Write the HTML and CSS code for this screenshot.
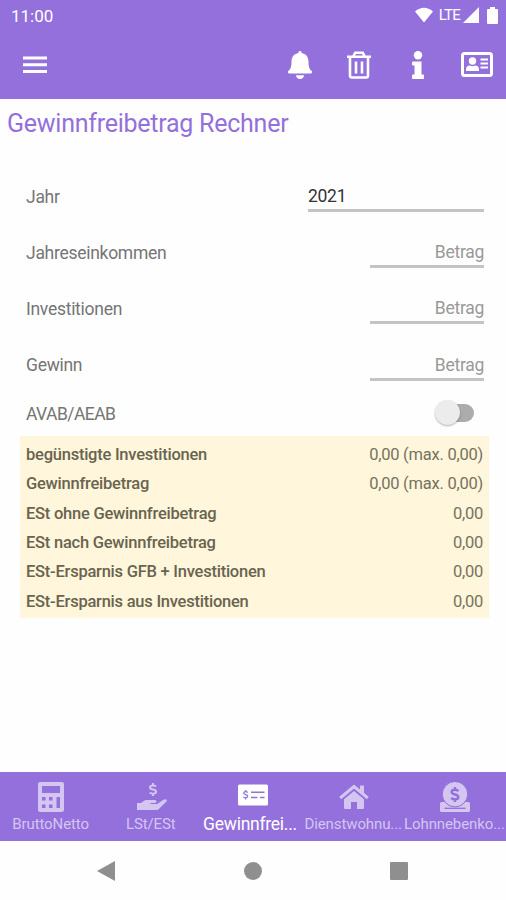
FILE: index.html
```html
<!DOCTYPE html>
<html lang="de">
<head>
	<meta charset="utf-8">
	<title>Gewinnfreibetrag Rechner</title>
	<link rel="stylesheet" href="styles.css">
</head>

<body>
	<header>
		<!-- Status bar -->
		<div class="status">
			<span class="time">11:00</span>
			<svg class="wifi" width="20" height="16" viewBox="0 0 20 16"><path d="M1 4.5Q10-3 19 4.5L10 15.5z"/></svg>
			<span class="lte">LTE</span>
			<svg class="signal" width="16" height="16" viewBox="0 0 16 16"><path d="M16 0v16H0z"/></svg>
			<svg class="battery" width="11" height="17" viewBox="0 0 11 17"><path d="M3 0h5v2h2q1 0 1 1v13q0 1-1 1H1q-1 0-1-1V3q0-1 1-1h2z"/></svg>
		</div>

		<!-- Toolbar -->
		<div class="toolbar">
			<svg class="menu" width="24" height="18" viewBox="0 0 24 18"><path d="M0 .5h24v3H0zM0 7.2h24v3H0zM0 14h24v3H0z"/></svg>
			<svg class="bell" width="26" height="28" viewBox="0 0 26 28"><path d="M11.500 2V1q0-1 1.500-1t1.500 1v1c4.500.8 7 4 7 8.500 0 6.500 1.300 7.600 3.300 9.600.8.900.2 2.400-1.100 2.400H2.300C1 22.500.4 21 1.200 20.100c2-2 3.300-3.100 3.300-9.600C4.500 6 7 2.800 11.500 2zM9 24.200h8Q16.500 28 13 28T9 24.200z"/></svg>
			<svg class="trash" width="26" height="28" viewBox="0 0 26 28"><path class="line" d="M1 5.700h24M7.500 5l1.700-3.300h7.600L18.500 5M4 6v18.500q0 2 2 2h14q2 0 2-2V6M10 10.500v12M16 10.500v12"/></svg>
			<svg class="info" width="12" height="28" viewBox="0 0 12 28"><circle cx="6" cy="4.200" r="4.200"/><path d="M1 10.500h8.500v13h1.600q.9 0 .9.900v2.700q0 .9-.9.900H.900Q0 28 0 27.100v-2.700q0-.9.900-.9h1.600v-9H1q-1 0-1-.9v-2.200q0-.9 1-.9z"/></svg>
			<svg class="card" width="32" height="25" viewBox="0 0 32 25"><rect class="line" x="1.500" y="1.500" width="29" height="22" rx="2"/><circle cx="11.500" cy="9" r="3.700"/><path d="M5 19v-1.500q0-4 4-4 2.500 1.300 5 0 4 0 4 4V19zM19.500 6.500H27v2h-7.500zM19.500 10.500H27v2h-7.500zM19.500 14.500H27v2h-7.500z"/></svg>
		</div>
	</header>

	<main>
		<h1>Gewinnfreibetrag Rechner</h1>

		<!-- Eingabe -->
		<div class="form">
			<div class="row">
				<span class="label">Jahr</span>
				<span class="field year">2021</span>
			</div>
			<div class="row">
				<span class="label">Jahreseinkommen</span>
				<span class="field">Betrag</span>
			</div>
			<div class="row">
				<span class="label">Investitionen</span>
				<span class="field">Betrag</span>
			</div>
			<div class="row">
				<span class="label">Gewinn</span>
				<span class="field">Betrag</span>
			</div>
			<div class="row toggle">
				<span class="label">AVAB/AEAB</span>
				<span class="switch"><span class="thumb"></span></span>
			</div>
		</div>

		<!-- Ergebnis -->
		<table class="result">
			<tr><th>begünstigte Investitionen</th><td>0,00 (max. 0,00)</td></tr>
			<tr><th>Gewinnfreibetrag</th><td>0,00 (max. 0,00)</td></tr>
			<tr><th>ESt ohne Gewinnfreibetrag</th><td>0,00</td></tr>
			<tr><th>ESt nach Gewinnfreibetrag</th><td>0,00</td></tr>
			<tr><th>ESt-Ersparnis GFB + Investitionen</th><td>0,00</td></tr>
			<tr><th>ESt-Ersparnis aus Investitionen</th><td>0,00</td></tr>
		</table>
	</main>

	<!-- Tabs -->
	<nav class="tabs">
		<div class="tab">
			<svg width="26" height="30" viewBox="0 0 26 30"><path fill-rule="evenodd" d="M2 0h22q2 0 2 2v26q0 2-2 2H2q-2 0-2-2V2q0-2 2-2zM4 4v7h18V4zM4 15v3.500h3.500V15zM11 15v3.500h3.500V15zM4 22.500V26h3.500v-3.500zM11 22.500V26h3.500v-3.500zM18.500 15v11H22V15z"/></svg>
			<span>BruttoNetto</span>
		</div>
		<div class="tab">
			<svg width="30" height="30" viewBox="0 0 30 30"><path class="line dollar" d="M19 4.500q-1-1-3-1-3 0-3 2 0 1.500 3 2t3 2.200q0 2-3 2-2 0-3.300-1.200M16 1v2.500M16 11.500V14"/><path d="M0 21h4l3-2.300q1-.7 2.500-.7H18q1.500 0 1.500 1.400T18 21h-4.500v1H20l6.500-4.200q1.700-.8 2.700-.3 1.300 1 0 2.300l-7.500 7.500q-1 .7-2.400.7H0z"/></svg>
			<span>LSt/ESt</span>
		</div>
		<div class="tab active">
			<svg width="30" height="30" viewBox="0 0 30 30"><path fill-rule="evenodd" d="M1.500 2.500h27Q30 2.500 30 4v18q0 1.500-1.500 1.500h-27Q0 23.500 0 22V4q0-1.500 1.500-1.500zM13 9.500V11h13.500V9.500zM13 14.700v1.600h6.500v-1.600zM22 14.700v1.600h4.500v-1.600z"/><path class="line cut" d="M9.700 10.500q-.8-.8-2-.8-2 0-2 1.400 0 1.100 2 1.500t2 1.600q0 1.500-2 1.500-1.300 0-2.200-.8M7.700 8v2M7.700 15.500v2"/></svg>
			<span>Gewinnfrei...</span>
		</div>
		<div class="tab">
			<svg width="30" height="30" viewBox="0 0 30 30"><path class="line roof" d="M1.200 16L15 4.500 28.800 16"/><path d="M21 3.500h4v9L21 9zM15 9l10 8.300V26q0 1-1 1h-6v-7h-6v7H6q-1 0-1-1v-8.700z"/></svg>
			<span>Dienstwohnu...</span>
		</div>
		<div class="tab">
			<svg width="30" height="30" viewBox="0 0 30 30"><path d="M1.500 20h4l3 3.500h13l3-3.500h4Q30 20 30 21.500v7q0 1.500-1.500 1.500h-27Q0 30 0 28.500v-7Q0 20 1.500 20z"/><circle class="ring" cx="15" cy="12.200" r="12.700"/><path class="line cut thick" d="M18.500 9q-1.300-1.200-3.500-1.200-3.300 0-3.300 2.200 0 1.800 3.300 2.500t3.300 2.600q0 2.300-3.300 2.300-2.300 0-3.800-1.400M15 5v2.500M15 17.500V20"/><path class="line cut" d="M4.500 26.300h21"/></svg>
			<span>Lohnnebenko...</span>
		</div>
	</nav>

	<!-- Android navigation -->
	<div class="navbar">
		<svg width="18" height="20" viewBox="0 0 18 20"><path d="M18 0v20L0 10z"/></svg>
		<svg width="18" height="18" viewBox="0 0 18 18"><circle cx="9" cy="9" r="9"/></svg>
		<svg width="18" height="18" viewBox="0 0 18 18"><rect width="18" height="18" rx="1"/></svg>
	</div>
</body>
</html>
```
FILE: styles.css
```css
* {
	box-sizing: border-box;
}
body {
	margin: 0;
	height: 900px;
	display: flex;
	flex-direction: column;
	font-family: Roboto, sans-serif;
	font-size: 17.5px;
	letter-spacing: -0.28px;
	color: #757575;
	background: #fefefe;
	overflow: hidden;
}
svg {
	display: block;
	flex: none;
	fill: currentColor;
}
.line {
	fill: none;
	stroke: currentColor;
	stroke-width: 3;
}

/* header */
header {
	height: 99px;
	background: #9370db;
	color: #fff;
}
.status {
	height: 31px;
	display: flex;
	align-items: center;
	padding: 0 8px 0 11px;
}
.time {
	font-size: 17px;
	letter-spacing: 0;
	margin-right: auto;
}
.lte {
	font-size: 15px;
	letter-spacing: -0.8px;
	margin: -2px 3px 0 5px;
}
.wifi,
.signal,
.battery {
	margin-top: -1px;
}
.battery {
	margin-left: 8px;
}
.toolbar {
	height: 67px;
	display: flex;
	align-items: center;
	padding: 0 13px 0 23px;
}
.menu {
	margin-right: auto;
}
.bell {
	margin-right: 33px;
}
.trash {
	margin-right: 40px;
}
.trash .line {
	stroke-width: 2.6;
}
.info {
	margin-right: 37px;
}

/* content */
main {
	flex: 1;
}
h1 {
	margin: 0;
	height: 69px;
	padding: 10px 0 0 7px;
	font-size: 25px;
	letter-spacing: -0.25px;
	line-height: 30px;
	font-weight: 400;
	color: #9370db;
}
.form {
	padding: 0 22px 0 26px;
}
.row {
	height: 56.2px;
	display: flex;
	justify-content: space-between;
	align-items: center;
}
.label {
	padding-top: 1px;
}
.field {
	width: 114px;
	height: 31px;
	margin-top: 1px;
	line-height: 30px;
	text-align: right;
	color: #999;
	border-bottom: 3px solid #c4c4c4;
}
.year {
	width: 176px;
	text-align: left;
	color: #333;
}
.toggle {
	height: 43.7px;
	padding: 0 10px 3px 0;
}
.toggle .label {
	letter-spacing: -0.55px;
}
.switch {
	width: 34px;
	height: 18px;
	border-radius: 9px;
	background: #acacac;
}
.thumb {
	display: block;
	width: 25px;
	height: 25px;
	margin: -4px 0 0 -5px;
	border-radius: 50%;
	background: #ececec;
	box-shadow: 0 1px 2px rgba(0, 0, 0, 0.3);
}

/* result */
.result {
	width: 469px;
	margin: 0 0 0 20px;
	padding: 4px 6px 1px 6px;
	border-spacing: 0;
	background: #fff6dc;
	color: #77725f;
}
.result th,
.result td {
	height: 29.35px;
	padding: 0;
	font-size: 16.5px;
	letter-spacing: -0.24px;
	line-height: 20px;
}
.result th {
	text-align: left;
	font-weight: 500;
	color: #69644f;
}
.result td {
	text-align: right;
}

/* bottom tabs */
.tabs {
	height: 69px;
	display: grid;
	grid-template-columns: repeat(5, minmax(0, 1fr));
	background: #9370db;
	color: #d5c5f1;
}
.tab {
	display: flex;
	flex-direction: column;
	align-items: center;
	padding-top: 10px;
	font-size: 15px;
	letter-spacing: -0.1px;
	line-height: 25px;
	white-space: nowrap;
}
.tab span {
	margin-right: 2px;
}
.tab:first-child span {
	margin-right: 0;
}
.active {
	font-size: 17.5px;
	letter-spacing: -0.25px;
	color: #fff;
}
.tab.active span {
	margin-right: 6px;
}
.dollar {
	stroke-width: 2;
}
.cut {
	stroke: #9370db;
	stroke-width: 1.3;
}
.thick {
	stroke-width: 2.4;
}
.ring {
	stroke: #9370db;
	stroke-width: 1;
}
.navbar {
	height: 59px;
	display: flex;
	justify-content: space-between;
	align-items: center;
	padding: 0 98px 0 97px;
	color: #8f8f8f;
}
```
